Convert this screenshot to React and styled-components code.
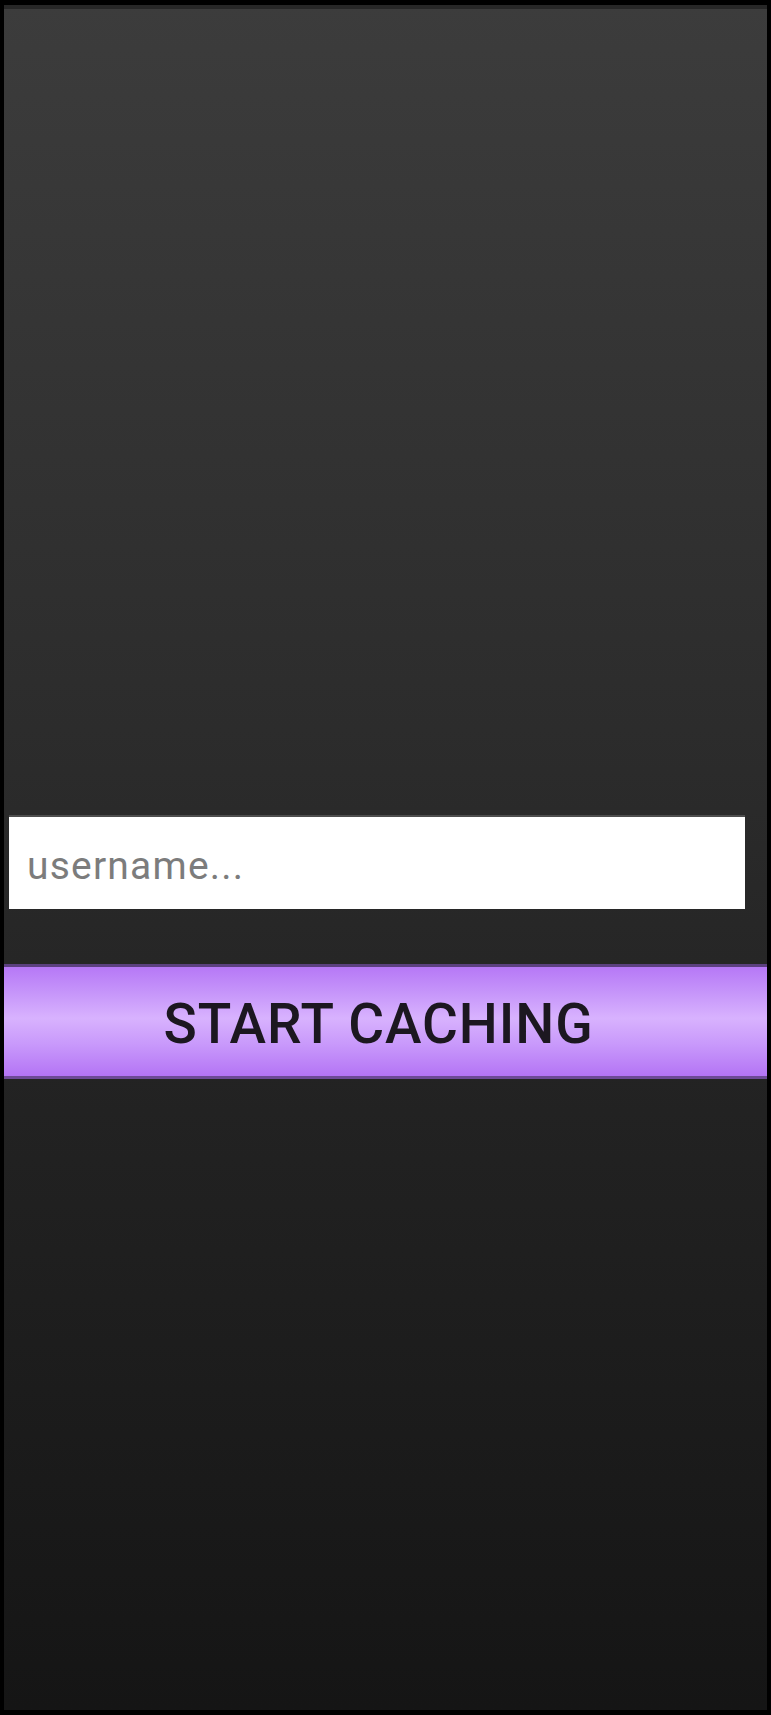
import React from "react";
import styled, { createGlobalStyle } from "styled-components";

const GlobalStyle = createGlobalStyle`
  html, body {
    margin: 0;
    padding: 0;
    background: #000;
  }
  * {
    box-sizing: border-box;
  }
`;

const Frame = styled.div`
  width: 771px;
  height: 1715px;
  padding: 5px 4px;
  background: #000;
`;

const Screen = styled.div`
  height: 100%;
  display: flex;
  flex-direction: column;
  background: linear-gradient(to bottom, #3c3c3c 0%, #2b2b2b 45%, #222 65%, #151515 100%);
`;

const StatusStrip = styled.div`
  height: 4px;
  background: #272727;
`;

const Form = styled.div`
  display: flex;
  flex-direction: column;
  margin-top: 806px;
`;

const UsernameInput = styled.input`
  width: 736px;
  height: 94px;
  margin-left: 5px;
  padding: 6px 0 0 18px;
  border: none;
  border-top: 2px solid #4d4d4d;
  background: #fff;
  font-family: Roboto, "Liberation Sans", sans-serif;
  font-size: 39px;
  letter-spacing: 1.2px;
  color: #555;
  outline: none;

  &::placeholder {
    color: #7c7c7c;
  }
`;

const CacheButton = styled.button`
  margin-top: 55px;
  width: 100%;
  height: 115px;
  padding: 4px 14px 0 0;
  border: none;
  border-top: 3px solid #5c4080;
  border-bottom: 3px solid #6d4a96;
  background: linear-gradient(
    to bottom,
    #b678f6 0%,
    #c797fa 25%,
    #d8b2fe 47%,
    #c99afb 70%,
    #b474f5 100%
  );
  font-family: Roboto, "Liberation Sans", sans-serif;
  font-size: 55px;
  font-weight: 500;
  color: #1c1720;
  letter-spacing: 0.9px;
  cursor: pointer;
`;

export default function App() {
  return (
    <>
      <GlobalStyle />
      <Frame>
        <Screen>
          <StatusStrip />
          <Form>
            <UsernameInput placeholder="username..." />
            <CacheButton>START CACHING</CacheButton>
          </Form>
        </Screen>
      </Frame>
    </>
  );
}
